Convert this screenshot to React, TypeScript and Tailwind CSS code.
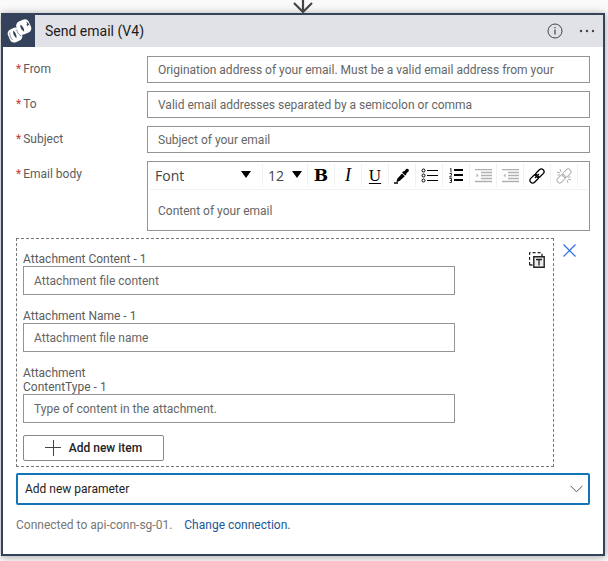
import type { ReactNode } from "react";

const fieldBox =
  "w-full border border-[#949494] bg-white px-[10px] text-[12px] text-[#444] placeholder:text-[#666] placeholder:opacity-100 outline-none";

function FieldRow({ id, label, children }: { id: string; label: string; children: ReactNode }) {
  return (
    <div className="flex items-start">
      <label htmlFor={id} className="w-[131px] shrink-0 pt-1 text-[12px] leading-[18px] text-[#5c5c5c]">
        <span className="mr-0.5 text-[#c43c3c]">*</span>
        {label}
      </label>
      <div className="min-w-0 flex-1">{children}</div>
    </div>
  );
}

function ToolButton({ label, disabled = false, children }: { label: string; disabled?: boolean; children: ReactNode }) {
  return (
    <button
      type="button"
      aria-label={label}
      disabled={disabled}
      className="flex h-[23px] w-[27px] shrink-0 items-center justify-center border-r border-[#f1f1f1] text-black disabled:text-[#b0b0b0]"
    >
      {children}
    </button>
  );
}

function ToolSelect({ label, value, width, arrow }: { label: string; value: string; width: string; arrow: string }) {
  return (
    <div className={`relative h-[23px] shrink-0 border-r border-[#f1f1f1] ${width}`}>
      <select
        aria-label={label}
        className="h-full w-full appearance-none bg-transparent pl-[5px] font-['Open_Sans',sans-serif] text-[14px] leading-[22px] text-[#444] outline-none"
      >
        <option>{value}</option>
      </select>
      <svg className={`pointer-events-none absolute top-[7px] ${arrow}`} width="10" height="7" viewBox="0 0 10 7">
        <path d="M0 0h10L5 7z" fill="#000" />
      </svg>
    </div>
  );
}

function LogoIcon() {
  return (
    <svg width="26" height="26" viewBox="0 0 26 26" aria-hidden="true">
      <g fill="#fff">
        <rect x="2.500" y="10" width="13" height="14" rx="4.500" transform="rotate(-24 9 17)" />
        <rect x="11" y="2" width="13.500" height="14" rx="4.500" transform="rotate(-24 17.700 9)" />
      </g>
      <g fill="#34425c">
        <path d="M7.300 12.500c-.8 2.700.5 5.700 3.200 7.800.3-3-.7-5.800-3.200-7.800Z" />
        <path d="M14.500 6.500c-.8 2.700.8 5.500 3.700 7.300.2-2.800-1.200-5.600-3.700-7.300Z" />
        <path d="M20 3.500c1.800.7 3 2.200 3.500 4l-1.500-.5-.5 1.500-1-2 .8-.8Z" />
      </g>
      <path d="M3.800 14.500c-.3 3 .9 5.700 2.800 7.500M10.800 11.500c0 2.500 1.700 5 4.500 6.500" fill="none" stroke="#34425c" strokeWidth=".6" />
    </svg>
  );
}

function ListIcon({ numbered = false }: { numbered?: boolean }) {
  return (
    <svg width="17" height="15" viewBox="0 0 17 15" aria-hidden="true">
      {[2, 7, 12].map((y, i) =>
        numbered ? (
          <g key={y} stroke="currentColor" fill="none">
            <path strokeWidth=".8" d={i === 0 ? "M2 1l1-.5v4" : i === 1 ? "M1.500 5.500h2v1.500l-2 2h2.500" : "M1.500 10.500h2v4h-2M2 12.500h1.500"} />
            <path d={`M6 ${y}h9`} strokeWidth="2" />
          </g>
        ) : (
          <g key={y} stroke="currentColor" fill="none">
            <circle cx="2.500" cy={y + 0.5} r="1.500" />
            <path d={`M6 ${y + 0.5}h11`} />
          </g>
        ),
      )}
    </svg>
  );
}

function IndentIcon({ outdent = false }: { outdent?: boolean }) {
  return (
    <svg width="17" height="14" viewBox="0 0 17 14" aria-hidden="true">
      <path d="M0 .5h17M6 3.500h11M6 6.500h11M6 9.500h11M0 12.500h17" stroke="currentColor" strokeWidth="1.500" />
      <path d={outdent ? "M3.500 4.500v4L1.500 6.500z" : "M1.500 4.500v4l2-2z"} fill="currentColor" />
    </svg>
  );
}

function LinkIcon({ broken = false }: { broken?: boolean }) {
  return (
    <svg width="16" height="16" viewBox="0 0 16 16" fill="none" stroke="currentColor" aria-hidden="true">
      <g transform="rotate(-45 8 8)" strokeWidth={broken ? 1 : 1.3}>
        <rect x="-.8" y="5.300" width="9.600" height="5.400" rx="2.700" />
        <rect x="7.200" y="5.300" width="9.600" height="5.400" rx="2.700" />
        {!broken && <path d="M5 8h6" />}
      </g>
      {broken && <path d="M1 4l3 1M4 1l1 3M1.500 7H4M15 12l-3-1M12 15l-1-3M14.500 9H12" />}
    </svg>
  );
}

function AttachmentField({ id, label, placeholder }: { id: string; label: string; placeholder: string }) {
  return (
    <div>
      <label htmlFor={id} className="block w-[130px] text-[12px] leading-[14px] text-[#5c5c5c]">
        {label}
      </label>
      <input id={id} placeholder={placeholder} className={`${fieldBox} block h-[29px]`} />
    </div>
  );
}

export default function App() {
  return (
    <main className="bg-[#fafafa] pr-[3px] pb-1.5 pl-px font-['Roboto','Noto_Sans',sans-serif]">
      <div className="flex h-[13px] justify-center">
        <svg width="20" height="13" viewBox="0 0 20 13" fill="none" stroke="#484644" aria-hidden="true">
          <path d="M10 0v12M1 3l9 9 9-9" strokeWidth="2.200" />
        </svg>
      </div>

      <section className="border-2 border-[#34425c] bg-white shadow-[0_1px_8px_rgba(0,0,0,0.35)]">
        <header className="flex h-8 items-center bg-[#e1e2e7]">
          <div className="flex h-full w-8 items-center justify-center bg-[#34425c]">
            <LogoIcon />
          </div>
          <h1 className="ml-2.5 flex-1 text-[14px] text-[#1b1b1b]">Send email (V4)</h1>
          <button type="button" aria-label="Information" className="mr-4">
            <svg width="16" height="16" viewBox="0 0 16 16" fill="none" stroke="#444">
              <circle cx="8" cy="8" r="7" />
              <path d="M8 6.500v5M8 4v1.300" strokeWidth="1.200" />
            </svg>
          </button>
          <button type="button" aria-label="More options" className="mr-2">
            <svg width="16" height="4" viewBox="0 0 16 4" fill="#444">
              <circle cx="2" cy="2" r="1.200" />
              <circle cx="8" cy="2" r="1.200" />
              <circle cx="14" cy="2" r="1.200" />
            </svg>
          </button>
        </header>

        <form className="px-[13px] pt-[9px] pb-5" onSubmit={(e) => e.preventDefault()}>
          <div className="flex flex-col gap-2">
            <FieldRow id="from" label="From">
              <input
                id="from"
                placeholder="Origination address of your email. Must be a valid email address from your"
                className={`${fieldBox} block h-[27px]`}
              />
            </FieldRow>
            <FieldRow id="to" label="To">
              <input
                id="to"
                placeholder="Valid email addresses separated by a semicolon or comma"
                className={`${fieldBox} block h-[27px]`}
              />
            </FieldRow>
            <FieldRow id="subject" label="Subject">
              <input id="subject" placeholder="Subject of your email" className={`${fieldBox} block h-[27px]`} />
            </FieldRow>
            <FieldRow id="body" label="Email body">
              <div className="border border-[#949494]">
                <div className="mx-0.5 flex h-7 items-center border-b border-[#f1f1f1]">
                  <ToolSelect label="Font" value="Font" width="w-[113px]" arrow="right-[11px]" />
                  <ToolSelect label="Font size" value="12" width="w-[45px]" arrow="right-[5px]" />
                  <ToolButton label="Bold">
                    <span className="font-['DejaVu_Serif',serif] text-[17px] font-bold">B</span>
                  </ToolButton>
                  <ToolButton label="Italic">
                    <span className="font-['Liberation_Serif',serif] text-[18px] italic">I</span>
                  </ToolButton>
                  <ToolButton label="Underline">
                    <span className="font-['Liberation_Serif',serif] text-[17px] underline underline-offset-2">U</span>
                  </ToolButton>
                  <ToolButton label="Text color">
                    <svg width="16" height="16" viewBox="0 0 16 16" aria-hidden="true">
                      <path d="M9 3.500 10.500 3l1.700-2c1.200-1.200 3.600.8 2.300 2.400l-2 1.800-.4 1.600-1 .6-3-2.900ZM8 5.500l2.800 2.700-5 4.600-2.600 1.200-.8-.8L3.500 10.500Z" fill="currentColor" />
                      <path d="M0 15h4" stroke="currentColor" strokeWidth="1.500" />
                    </svg>
                  </ToolButton>
                  <ToolButton label="Bulleted list"><ListIcon /></ToolButton>
                  <ToolButton label="Numbered list"><ListIcon numbered /></ToolButton>
                  <ToolButton label="Increase indent" disabled><IndentIcon /></ToolButton>
                  <ToolButton label="Decrease indent" disabled><IndentIcon outdent /></ToolButton>
                  <ToolButton label="Insert link"><LinkIcon /></ToolButton>
                  <ToolButton label="Remove link" disabled><LinkIcon broken /></ToolButton>
                </div>
                <textarea
                  id="body"
                  placeholder="Content of your email"
                  className="block h-10 w-full resize-none px-[10px] pt-3 text-[12px] leading-[18px] outline-none placeholder:text-[#666] placeholder:opacity-100"
                />
              </div>
            </FieldRow>
          </div>

          <div className="mt-[7px] flex items-start">
            <fieldset className="flex min-w-0 flex-1 justify-between border border-dashed border-[#777] px-1.5 pt-[13px] pb-[5px]">
              <div className="w-[432px] min-w-0">
                <div className="flex flex-col gap-3.5">
                  <AttachmentField id="content" label="Attachment Content - 1" placeholder="Attachment file content" />
                  <AttachmentField id="name" label="Attachment Name - 1" placeholder="Attachment file name" />
                  <AttachmentField id="type" label="Attachment ContentType - 1" placeholder="Type of content in the attachment." />
                </div>
                <button
                  type="button"
                  className="mt-3 flex h-[26px] w-[141px] items-center justify-center gap-2 rounded-[2px] border border-[#8a8886] text-[12px] font-medium text-[#222]"
                >
                  <svg width="16" height="16" viewBox="0 0 16 16" stroke="#444" aria-hidden="true">
                    <path d="M8.500 0v16M0 7.500h16" />
                  </svg>
                  Add new item
                </button>
              </div>
              <button type="button" aria-label="Switch to input entire array" className="mr-0.5 self-start">
                <svg width="16" height="16" viewBox="0 0 16 16" fill="none" stroke="#222">
                  <path d="M.5 13V1.500a1 1 0 0 1 1-1H12a1 1 0 0 1 1 1V4M.5 13H4" strokeDasharray="3 2" strokeWidth="1.300" />
                  <path d="M4.800 4.800h10.400v10.400H4.800z" fill="#eee" strokeWidth="1.400" />
                  <path d="M7 7.500h6M10 7.500v6" strokeWidth="1.300" />
                </svg>
              </button>
            </fieldset>
            <button type="button" aria-label="Remove item" className="mt-1.5 mr-3.5 ml-[9px]">
              <svg width="13" height="13" viewBox="0 0 13 13" stroke="#2f6fe4" aria-hidden="true">
                <path d="M.5.5l12 12M12.500.5l-12 12" strokeWidth="1.200" />
              </svg>
            </button>
          </div>

          <div className="relative mt-1.5">
            <select
              aria-label="Add new parameter"
              className="block h-8 w-full appearance-none rounded-[2px] border-2 border-[#1474b8] bg-white px-[7px] text-[12px] text-[#222] outline-none"
            >
              <option>Add new parameter</option>
            </select>
            <svg className="pointer-events-none absolute top-3 right-[7px]" width="13" height="8" viewBox="0 0 13 8" fill="none" stroke="#555">
              <path d="M.5.800l6 6 6-6" />
            </svg>
          </div>

          <p className="mt-[11px] text-[12px] leading-[18px] text-[#767676]">
            Connected to api-conn-sg-01.
            <a href="#connection" className="ml-3 text-[#1b5796]">
              Change connection.
            </a>
          </p>
        </form>
      </section>
    </main>
  );
}
